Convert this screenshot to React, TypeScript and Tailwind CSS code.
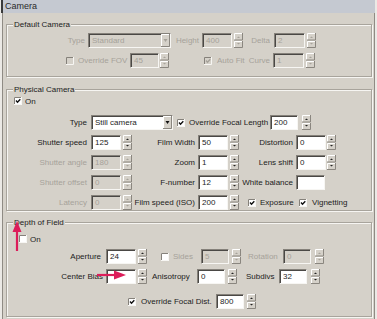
import React from 'react';

const TXT = 'text-[#1c1c1c]';
const DIS = 'text-[#a6a29a]';

const Spin = ({ disabled = false, className = '' }: { disabled?: boolean; className?: string }) => {
  const a = disabled ? '#a6a29a' : '#222';
  return (
    <svg width="9" height="15" viewBox="0 0 9 15" className={`shrink-0 ${className}`}>
      <rect x="0" y="0" width="9" height="15" fill="#d5d1c9" />
      <path d="M0.5 7V0.5H8" stroke="#fff" fill="none" />
      <path d="M0 7H8.5V0" stroke="#8a867f" fill="none" />
      <path d="M0.5 14.5V8.5H8" stroke="#fff" fill="none" />
      <path d="M0 14.5H8.5V8" stroke="#8a867f" fill="none" />
      <polygon points="3,5 6,5 4.5,3.5" fill={a} />
      <polygon points="3,10 6,10 4.5,11.5" fill={a} />
    </svg>
  );
};

const Field = ({ value = '', disabled = false, className = 'w-[30px]' }: { value?: string; disabled?: boolean; className?: string }) => (
  <div
    className={`h-[15px] shrink-0 border border-t-[#85817a] border-l-[#85817a] border-b-[#f7f6f3] border-r-[#f7f6f3] shadow-[inset_1px_1px_0_#4a4845] pl-[3px] leading-[13px] ${
      disabled ? `bg-[#d5d1c9] ${DIS}` : `bg-white ${TXT}`
    } ${className}`}
  >
    {value}
  </div>
);

const Check = ({ checked = false, disabled = false, className = '' }: { checked?: boolean; disabled?: boolean; className?: string }) => (
  <svg width="8" height="8" viewBox="0 0 8 8" className={`shrink-0 ${className}`}>
    <rect x="0" y="0" width="8" height="8" fill={disabled ? '#d5d1c9' : '#fff'} />
    <path d="M0.5 8V0.5H8" stroke="#85817a" fill="none" />
    <path d="M0 7.5H7.5V0" stroke="#f7f6f3" fill="none" />
    {checked && <path d="M2 3.5L3.5 5.2L6.3 2.2" stroke={disabled ? '#a6a29a' : '#111'} strokeWidth="1.4" fill="none" />}
  </svg>
);

const Select = ({ value, disabled = false, className = '' }: { value: string; disabled?: boolean; className?: string }) => (
  <div
    className={`h-[15px] shrink-0 flex border border-t-[#85817a] border-l-[#85817a] border-b-[#f7f6f3] border-r-[#f7f6f3] shadow-[inset_1px_1px_0_#4a4845] ${
      disabled ? `bg-[#d5d1c9] ${DIS}` : `bg-white ${TXT}`
    } ${className}`}
  >
    <span className="flex-1 pl-[3px] leading-[13px]">{value}</span>
    <svg width="9" height="13" viewBox="0 0 9 13" className="shrink-0">
      <rect x="0" y="0" width="9" height="13" fill="#d5d1c9" />
      <path d="M0.5 12.5V0.5H8.5" stroke="#fff" fill="none" />
      <path d="M0 12.5H8.5V0" stroke="#8a867f" fill="none" />
      <polygon points="2.5,5 6.5,5 4.5,8" fill={disabled ? '#a6a29a' : '#111'} />
    </svg>
  </div>
);

const L = ({ children, className = '', disabled = false }: { children: React.ReactNode; className?: string; disabled?: boolean }) => (
  <span className={`shrink-0 whitespace-nowrap leading-[15px] ${disabled ? DIS : TXT} ${className}`}>{children}</span>
);

const Group = ({ title, className = '', children }: { title: string; className?: string; children: React.ReactNode }) => (
  <div
    className={`relative ml-[3px] w-[366px] border border-[#a8a49c] shadow-[inset_1px_1px_0_#f6f5f2,1px_1px_0_#f6f5f2] ${className}`}
  >
    <span className={`absolute left-[6px] top-[-5px] bg-[#d5d1c9] px-[1px] leading-[10px] ${TXT}`}>{title}</span>
    {children}
  </div>
);

export default function App() {
  return (
    <div className="relative w-[377px] h-[319px] overflow-hidden bg-[#ebe9e5] font-['Liberation_Sans',Arial,sans-serif] text-[8px]">
      <div className="w-[374px] h-[13px] bg-[#c5c9d1] border-l-2 border-[#3a3a3a] ml-[1px] pl-[2px] leading-[13px] text-[#2a2a2a] text-[9px]">
        Camera
      </div>
      <div className="w-[373px] h-[306px] ml-[2px] bg-[#d5d1c9] border-l border-r border-[#8f8b84] pt-[11px]">
        <Group title="Default Camera" className="h-[53px] pt-[8px] flex flex-col gap-[5px]">
          <div className="flex items-center">
            <L disabled className="w-[81px] text-right pr-[3px]">Type</L>
            <Select disabled value="Standard" className="w-[83px]" />
            <L disabled className="w-[31px] text-right pr-[3px]">Height</L>
            <Field disabled value="400" />
            <Spin disabled className="ml-[2px]" />
            <L disabled className="w-[31px] text-right pr-[4px]">Delta</L>
            <Field disabled value="2" className="w-[31px]" />
            <Spin disabled className="ml-[2px]" />
          </div>
          <div className="flex items-center">
            <Check disabled className="ml-[59px]" />
            <L disabled className="ml-[4px] w-[52px]">Override FOV</L>
            <Field disabled value="45" className="w-[29px]" />
            <Spin disabled className="ml-[1px]" />
            <Check disabled checked className="ml-[35px]" />
            <L disabled className="ml-[5px] w-[30px]">Auto Fit</L>
            <L disabled className="w-[26px] text-right pr-[3px]">Curve</L>
            <Field disabled value="1" className="w-[31px]" />
            <Spin disabled className="ml-[2px]" />
          </div>
        </Group>

        <Group title="Physical Camera" className="mt-[12px] h-[122px] pt-[7px]">
          <div className="flex items-center h-[8px] ml-[7px]">
            <Check checked />
            <L className="ml-[3px]">On</L>
          </div>
          <div className="flex flex-col gap-[5px] mt-[10px]">
            <div className="flex items-center">
              <L className="w-[84px] text-right pr-[4px]">Type</L>
              <Select value="Still camera" className="w-[82px]" />
              <Check checked className="ml-[4px]" />
              <L className="ml-[4px] w-[81px]">Override Focal Length</L>
              <Field value="200" className="w-[28px]" />
              <Spin className="ml-[4px]" />
            </div>
            <div className="flex items-center">
              <L className="w-[84px] text-right pr-[4px]">Shutter speed</L>
              <Field value="125" />
              <Spin className="ml-[2px]" />
              <L className="w-[66px] text-right pr-[3px]">Film Width</L>
              <Field value="50" />
              <Spin className="ml-[2px]" />
              <L className="w-[57px] text-right pr-[3px]">Distortion</L>
              <Field value="0" />
              <Spin className="ml-[1px]" />
            </div>
            <div className="flex items-center">
              <L disabled className="w-[84px] text-right pr-[4px]">Shutter angle</L>
              <Field disabled value="180" />
              <Spin disabled className="ml-[2px]" />
              <L className="w-[66px] text-right pr-[3px]">Zoom</L>
              <Field value="1" />
              <Spin className="ml-[2px]" />
              <L className="w-[57px] text-right pr-[3px]">Lens shift</L>
              <Field value="0" />
              <Spin className="ml-[1px]" />
            </div>
            <div className="flex items-center">
              <L disabled className="w-[84px] text-right pr-[4px]">Shutter offset</L>
              <Field disabled value="0" />
              <Spin disabled className="ml-[2px]" />
              <L className="w-[66px] text-right pr-[3px]">F-number</L>
              <Field value="12" />
              <Spin className="ml-[2px]" />
              <L className="w-[57px] text-right pr-[3px]">White balance</L>
              <Field className="w-[29px]" />
            </div>
            <div className="flex items-center">
              <L disabled className="w-[84px] text-right pr-[4px]">Latency</L>
              <Field disabled value="0" />
              <Spin disabled className="ml-[2px]" />
              <L className="w-[66px] text-right pr-[3px]">Film speed (ISO)</L>
              <Field value="200" />
              <Spin className="ml-[2px]" />
              <Check checked className="ml-[9px]" />
              <L className="ml-[4px] w-[39px]">Exposure</L>
              <Check checked />
              <L className="ml-[5px]">Vignetting</L>
            </div>
          </div>
        </Group>

        <Group title="Depth of Field" className="mt-[11px] h-[95px] pt-[12px]">
          <div className="flex items-center h-[8px] ml-[12px]">
            <Check />
            <L className="ml-[3px]">On</L>
          </div>
          <div className="flex flex-col gap-[5px] mt-[6px]">
            <div className="flex items-center">
              <L className="w-[99px] text-right pr-[5px]">Aperture</L>
              <Field value="24" />
              <Spin className="ml-[2px]" />
              <Check className="ml-[14px]" />
              <L disabled className="ml-[4px] w-[28px]">Sides</L>
              <Field disabled value="5" className="w-[28px]" />
              <Spin disabled className="ml-[3px]" />
              <L disabled className="w-[42px] pl-[7px]">Rotation</L>
              <Field disabled value="0" className="w-[28px]" />
              <Spin disabled className="ml-[4px]" />
            </div>
            <div className="flex items-center">
              <L className="w-[99px] text-right pr-[3px]">Center Bias</L>
              <Field />
              <Spin className="ml-[2px]" />
              <L className="ml-[5px] w-[45px]">Anisotropy</L>
              <Field value="0" className="w-[28px]" />
              <Spin className="ml-[3px]" />
              <L className="w-[42px] pl-[9px]">Subdivs</L>
              <Field value="32" className="w-[28px]" />
              <Spin className="ml-[4px]" />
            </div>
            <div className="flex items-center mt-[5px]">
              <Check checked className="ml-[121px]" />
              <L className="ml-[5px] w-[75px]">Override Focal Dist.</L>
              <Field value="800" className="w-[28px]" />
              <Spin className="ml-[3px]" />
            </div>
          </div>
        </Group>
      </div>

      {/* annotation arrows drawn over the panel */}
      <svg className="absolute left-0 top-0 pointer-events-none" width="377" height="319" viewBox="0 0 377 319">
        <line x1="17" y1="251" x2="17" y2="230" stroke="#dc1d5a" strokeWidth="2.2" />
        <polygon points="17,221 12.5,232 21.5,232" fill="#dc1d5a" />
        <line x1="97" y1="275" x2="116" y2="275" stroke="#dc1d5a" strokeWidth="2.2" />
        <polygon points="126,275 114,270.5 114,279.5" fill="#dc1d5a" />
      </svg>
    </div>
  );
}
